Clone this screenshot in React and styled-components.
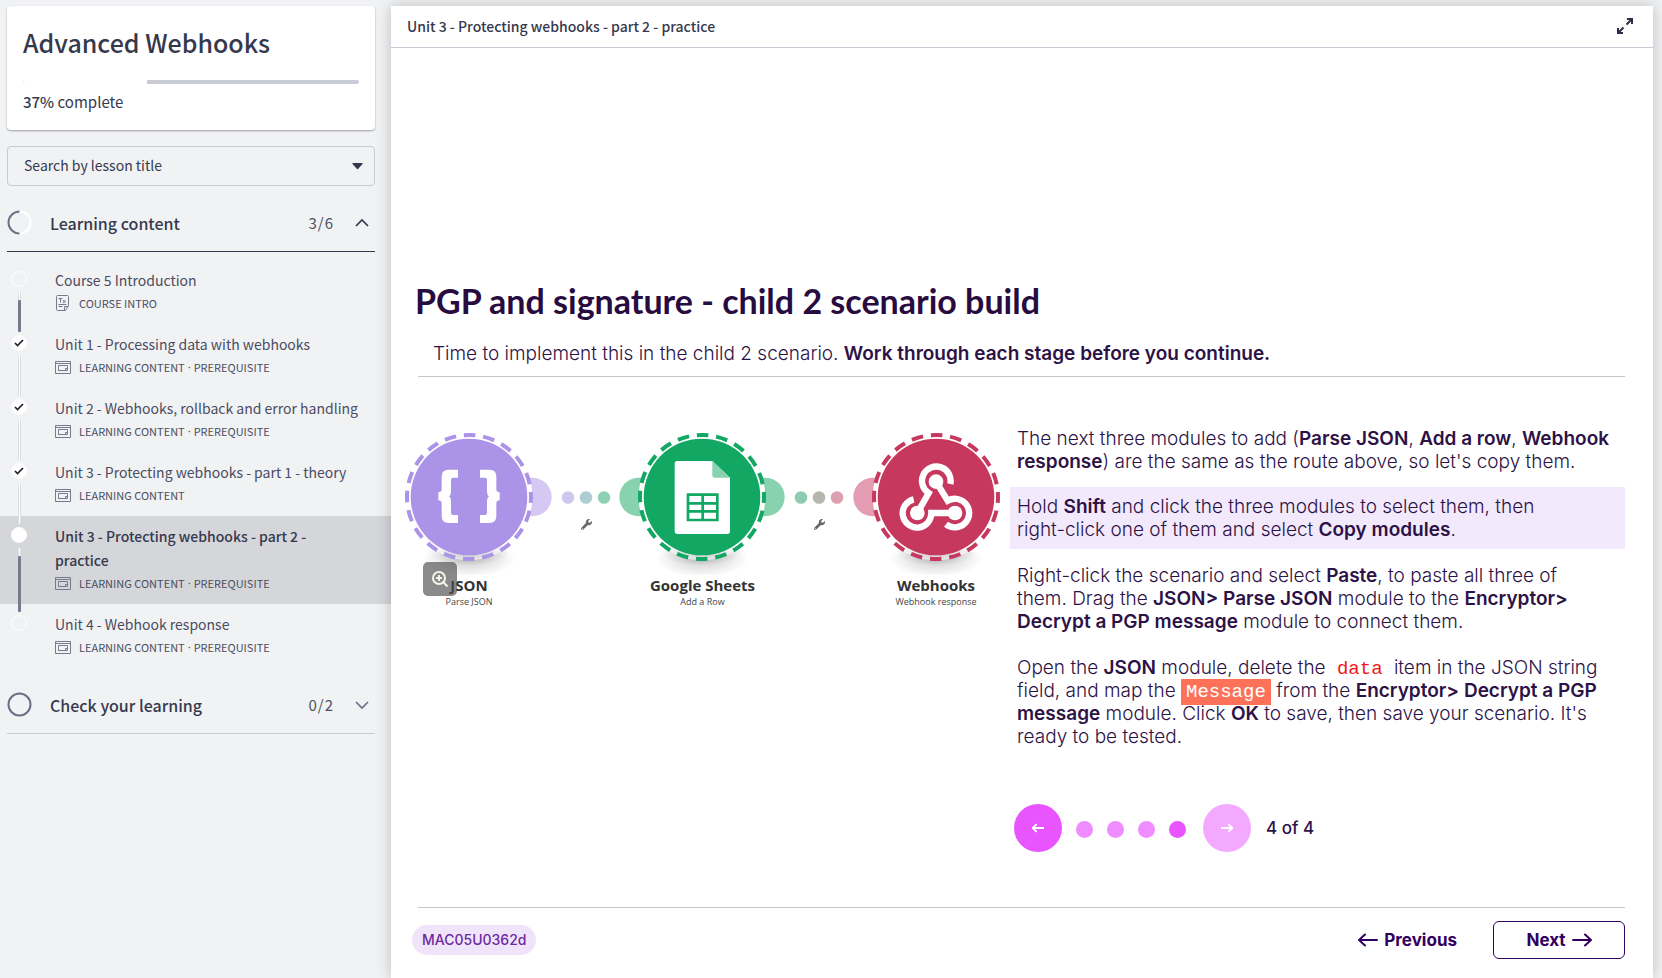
import React from 'react';
import styled, { createGlobalStyle, css } from 'styled-components';
import { FaWrench } from 'react-icons/fa';

const ui = '"Noto Sans CJK SC", "Noto Sans", sans-serif';
const body = 'Inter, "Liberation Sans", sans-serif';
const mono = '"Liberation Mono", monospace';
const ink = '#36394d';
const plum = '#2d1246';

const GlobalStyle = createGlobalStyle`
  * { box-sizing: border-box; }
  body { margin: 0; background: #f1f2f4; color: ${ink}; font-family: ${ui}; }
  h1, h2, p, ol { margin: 0; padding: 0; }
  button { font: inherit; color: inherit; padding: 0; border: 0; background: none; cursor: pointer; }
  a { color: inherit; text-decoration: none; }
`;

const Page = styled.div`
  display: grid;
  grid-template-columns: 391px minmax(0, 1fr);
  min-height: 100vh;
  padding: 6px 9px 0 0;
`;

/* Sidebar */

const Sidebar = styled.aside`
  display: flex;
  flex-direction: column;
`;

const CourseCard = styled.section`
  height: 124px;
  margin: 0 16px 16px 7px;
  padding: 16px 16px 0;
  background: #fff;
  border-radius: 4px;
  box-shadow: 0 1px 2px rgba(30, 32, 50, 0.4);
`;

const CourseTitle = styled.h1`
  font-size: 25px;
  line-height: 40px;
  font-weight: 500;
`;

const Progress = styled.div`
  height: 4px;
  margin-top: 18px;
  overflow: hidden;
  border-radius: 2px;
  background: #c9cbd5;
`;

const ProgressFill = styled.div`
  height: 100%;
  background: #fff;
`;

const ProgressText = styled.p`
  margin-top: 6px;
  font-size: 15px;
  line-height: 24px;
  b { font-weight: 500; }
`;

const SearchBox = styled.label`
  position: relative;
  display: block;
  margin: 0 16px 9px 7px;
  svg { position: absolute; right: 12px; top: 17px; pointer-events: none; }
`;

const SearchSelect = styled.select`
  appearance: none;
  display: block;
  width: 100%;
  height: 40px;
  padding: 0 16px 2px;
  border: 1px solid #c7c9d3;
  border-radius: 4px;
  background: transparent;
  color: ${ink};
  font: 14px/24px ${ui};
`;

const SectionHeader = styled.button`
  display: flex;
  align-items: center;
  height: 57px;
  margin: 0 16px 0 7px;
  padding-bottom: 1px;
  border-bottom: 1px solid ${(p) => (p.$open ? ink : '#c7c9d3')};
  text-align: left;
`;

const SectionName = styled.span`
  flex: 1;
  margin-left: 18px;
  font-size: 16px;
  line-height: 24px;
  font-weight: 500;
`;

const SectionCount = styled.span`
  margin-right: 15px;
  font-size: 15px;
  line-height: 24px;
  letter-spacing: 1px;
  color: #4d5064;
`;

const LessonList = styled.ol`
  list-style: none;
  padding: 8px 0 9px;
`;

const Lesson = styled.a`
  display: grid;
  grid-template-columns: 16px minmax(0, 1fr);
  column-gap: 28px;
  padding: 0 16px 0 11px;
  ${(p) => p.$current && css`background: #d5d6da;`}
`;

const Rail = styled.span`
  display: flex;
  flex-direction: column;
  align-items: center;
  padding-top: 11px;
`;

const Dot = styled.span`
  display: grid;
  place-items: center;
  flex: none;
  width: 16px;
  height: 16px;
  border: 1px solid #fff;
  border-radius: 50%;
  background: ${(p) => (p.$filled ? '#fff' : 'transparent')};
`;

const Track = styled.span`
  position: relative;
  flex: 1;
  width: 3px;
  margin: 5px 0 -8px;
  padding-top: 8px;
  border: solid #dcdde1;
  border-width: 0 1px;
  background: #fff;
`;

const TrackFill = styled.span`
  display: block;
  height: 100%;
  margin: 0 -1px;
  border-radius: 1px;
  background: #777a8d;
`;

const LessonText = styled.span`
  display: block;
  padding: 8px 0 10px;
`;

const LessonName = styled.span`
  display: block;
  white-space: pre-line;
  font-size: 14px;
  line-height: 24px;
  font-weight: ${(p) => (p.$current ? 500 : 400)};
  color: ${(p) => (p.$current ? ink : '#4a4d61')};
`;

const LessonMeta = styled.span`
  display: flex;
  align-items: center;
  font-size: 11px;
  line-height: 22px;
  color: #4a4d61;
  svg { margin-right: 8px; }
`;

const Separator = styled.span`
  margin: 0 3px;
  font-family: "Noto Sans", sans-serif;
`;

/* Lesson panel */

const Panel = styled.main`
  display: flex;
  flex-direction: column;
  background: #fff;
  box-shadow: 0 0 14px rgba(0, 0, 0, 0.22);
`;

const PanelHeader = styled.header`
  display: flex;
  align-items: center;
  justify-content: space-between;
  height: 42px;
  padding: 0 20px 2px 16px;
  border-bottom: 1px solid #c9c9d6;
`;

const PanelTitle = styled.h2`
  font-size: 14px;
  line-height: 20px;
  font-weight: 500;
`;

const IconButton = styled.button`
  display: grid;
  place-items: center;
  width: 16px;
  height: 16px;
`;

const Content = styled.article`
  flex: 1;
  display: flex;
  flex-direction: column;
  padding: 233px 28px 0 14px;
  font-family: ${body};
  color: ${plum};
  b { font-weight: 600; }
`;

const Heading = styled.h2`
  margin-left: 10px;
  font: 700 34px/40px Lato, ${body};
  color: #280b3f;
`;

const Intro = styled.p`
  margin: 21px 0 11px 28px;
  font-size: 19px;
  line-height: 23px;
  font-weight: 300;
`;

const Rule = styled.hr`
  width: calc(100% - 13px);
  height: 1px;
  margin: ${(p) => (p.$lower ? 55 : 0)}px 0 0 13px;
  border: 0;
  background: #cdc4ca;
`;

const Columns = styled.div`
  display: grid;
  grid-template-columns: 595px minmax(0, 1fr);
  column-gap: 10px;
  margin-top: 50px;
`;

const Diagram = styled.figure`
  position: relative;
  margin: 6px 0 0;
  > svg { display: block; width: 100%; }
`;

const Labels = styled.figcaption`
  display: flex;
  justify-content: space-between;
`;

const ModuleLabel = styled.span`
  width: 128px;
  text-align: center;
  font: 700 15px/20px "Open Sans", sans-serif;
  color: #333;
  small {
    display: block;
    font-size: 9px;
    line-height: 14px;
    font-weight: 400;
    color: #444;
  }
`;

const ZoomButton = styled.button`
  position: absolute;
  left: 18px;
  top: 129px;
  display: grid;
  place-items: center;
  width: 34px;
  height: 34px;
  border-radius: 5px;
  background: rgba(78, 78, 78, 0.66);
`;

const Steps = styled.div`
  display: flex;
  flex-direction: column;
  font-size: 19px;
  line-height: 23px;
  font-weight: 300;
`;

const Step = styled.p`
  padding: 0 7px;
  margin-bottom: ${(p) => p.$gap}px;
  ${(p) => p.$active && css`
    padding-top: 8px;
    padding-bottom: 8px;
    background: #f2e9fc;
  `}
`;

const Code = styled.code`
  padding: 0 6px;
  font: 400 19px/20px ${mono};
  color: #f01818;
`;

const Token = styled.code`
  padding: 2px 5px;
  background: #fc7158;
  color: #fff;
  font: 400 19px/20px ${mono};
`;

const Pager = styled.nav`
  display: flex;
  align-items: center;
  margin-top: 56px;
  padding-left: 4px;
  font-size: 17px;
  line-height: 24px;
  font-weight: 500;
`;

const RoundButton = styled.button`
  display: grid;
  place-items: center;
  width: 48px;
  height: 48px;
  border-radius: 50%;
  background: ${(p) => (p.$muted ? '#f3a9ff' : '#e855ff')};
`;

const PageDots = styled.span`
  display: flex;
  gap: 14px;
  margin: 3px 17px 0 14px;
`;

const PageDot = styled.button`
  width: 17px;
  height: 17px;
  border-radius: 50%;
  background: ${(p) => (p.$active ? '#e855ff' : '#ef8cff')};
`;

const PageCount = styled.span`
  margin-left: 15px;
`;

const Footer = styled.footer`
  display: flex;
  align-items: center;
  margin-top: 13px;
  padding: 0 0 18px 7px;
  font-size: 17px;
  line-height: 24px;
  font-weight: 700;
  color: #32005e;
`;

const Chip = styled.span`
  margin-right: auto;
  padding: 0 10px;
  border-radius: 15px;
  background: #f0e4fb;
  color: #6b2a9e;
  font-size: 14px;
  line-height: 30px;
  font-weight: 500;
`;

const NavButton = styled.button`
  display: flex;
  align-items: center;
  justify-content: center;
  gap: 6px;
  height: 38px;
  ${(p) => p.$outlined && css`
    width: 132px;
    margin-left: 36px;
    border: 1px solid #32005e;
    border-radius: 6px;
  `}
`;

const LessonIcon = () => (
  <svg width="16" height="13" viewBox="0 0 16 13" fill="none" stroke="#777a8d">
    <path d="M.5.5h15v12H.5zM.5 2.5h15M3.5 4.5h9v5h-9zM12 7.500h-1.500V9" />
  </svg>
);

const DocIcon = () => (
  <svg width="16" height="16" viewBox="0 0 16 16" fill="none" stroke="#777a8d">
    <path d="M2.500.5h10q1 0 1 1v9l-3 5h-8q-1 0-1-1v-13q0-1 1-1zM9.500 15.500v-4h4M3.500 9.500h8M3.500 11.500h4M3.500 3.500h4M5.500 3.500v4M8 5l2.500 3M10.500 5 8 8" />
  </svg>
);

const CheckIcon = () => (
  <svg width="10" height="8" viewBox="0 0 10 8" fill="none" stroke="#1d1f2b" strokeWidth="1.7">
    <path d="m1 4 2.500 2.500L9 1" />
  </svg>
);

const SectionRing = ({ half }) => (
  <svg width="25" height="25" viewBox="0 0 25 25" fill="none" strokeWidth="2">
    <circle cx="12.5" cy="12.5" r="11" stroke={half ? '#fff' : '#6d7085'} />
    {half && <path d="M12.500 23.500a11 11 0 0 1 0-22" stroke="#6d7085" />}
  </svg>
);

const Chevron = ({ up }) => (
  <svg width="26" height="16" viewBox="0 0 26 16" fill="none" stroke={up ? ink : '#6d7085'} strokeWidth="1.7">
    <path d={up ? 'M7 11l6-6 6 6' : 'M7 5l6 6 6-6'} />
  </svg>
);

const Arrow = ({ right, size = 20, color = '#32005e', weight = 2 }) => (
  <svg width={size} height={size} viewBox="0 0 20 20" fill="none" stroke={color} strokeWidth={weight} strokeLinecap="round" strokeLinejoin="round">
    <path d={right ? 'M1 10h18M13 4.500l6 5.500-6 5.500' : 'M19 10H1M7 4.500 1 10l6 5.500'} />
  </svg>
);

const Module = ({ x, color, tint, left, right, children }) => (
  <g transform={`translate(${x} 64) scale(.3333)`}>
    <ellipse cx="0" cy="185" rx="140" ry="56" fill="url(#shade)" />
    {left && <circle cx="-190" cy="0" r="58" fill={tint} />}
    {right && <circle cx="190" cy="0" r="58" fill={tint} />}
    <circle r="190" fill="#fff" />
    <ellipse cx="0" cy="170" rx="120" ry="36" fill="url(#shade)" />
    <circle r="186" fill="none" stroke={color} strokeWidth="12" strokeDasharray="35 23.430" strokeDashoffset="17" />
    <circle r="175" fill={color} />
    {children}
  </g>
);

const Link = ({ x, colors }) => (
  <g>
    {colors.map((c, i) => (
      <circle key={c} cx={x + (i - 1) * 18} cy="64.5" r="6.3" fill={c} />
    ))}
    <FaWrench x={x - 5} y="86" size={11} color="#666" />
  </g>
);

const brace = 'M-33-82h-29q-20 0-20 20v38q0 10-10 10v24q10 0 10 10v38q0 20 20 20h29v-24h-15q-6 0-6-6v-36q0-10-6-14 6-4 6-14v-36q0-6 6-6h15z';

const Flow = () => (
  <svg viewBox="0 0 595 142" role="img" aria-label="JSON, Google Sheets and Webhooks modules">
    <defs>
      <radialGradient id="shade">
        <stop offset="0" stopColor="#000" stopOpacity=".2" />
        <stop offset="1" stopColor="#000" stopOpacity="0" />
      </radialGradient>
    </defs>
    <Module x={64} color="#ab93e8" tint="#d5c8f2" right>
      <path d={brace} fill="#fff" />
      <path d={brace} fill="#fff" transform="scale(-1 1)" />
    </Module>
    <Link x={181} colors={['#cfc8ec', '#adcdd2', '#8dd1b4']} />
    <Module x={297} color="#12a762" tint="#88d2b0" left right>
      <path d="M-74-108H31l53 50v161q0 8-8 8H-74q-8 0-8-8v-203q0-8 8-8z" fill="#fff" />
      <path d="M31-108l53 50H39q-8 0-8-8z" fill="#88d2b0" />
      <path d="M-42-7h88v76h-88zM2-7v76M-42 19h88M-42 43h88" fill="none" stroke="#12a762" strokeWidth="8" />
    </Module>
    <Link x={414} colors={['#8dccb0', '#b6b6ae', '#dba0b0']} />
    <Module x={531} color="#c7385f" tint="#e39cb2" left>
      <g fill="none" stroke="#fff" strokeWidth="19">
        <path d="M43-39A43 43 0 1 0-22-12L-56 48" />
        <path d="M-67 7A43 43 0 1 0-14 48H57" />
        <path d="M30 82A43 43 0 1 0 35 11L0-46" />
      </g>
      <g fill="#fff">
        <circle cx="0" cy="-46" r="22" />
        <circle cx="-56" cy="48" r="22" />
        <circle cx="57" cy="48" r="22" />
      </g>
    </Module>
  </svg>
);

const lessons = [
  { name: 'Course 5 Introduction', kind: 'COURSE INTRO', doc: true, fill: true },
  { name: 'Unit 1 - Processing data with webhooks', kind: 'LEARNING CONTENT', required: true, done: true },
  { name: 'Unit 2 - Webhooks, rollback and error handling', kind: 'LEARNING CONTENT', required: true, done: true },
  { name: 'Unit 3 - Protecting webhooks - part 1 - theory', kind: 'LEARNING CONTENT', done: true },
  { name: 'Unit 3 - Protecting webhooks - part 2 -\npractice', kind: 'LEARNING CONTENT', required: true, current: true, fill: true },
  { name: 'Unit 4 - Webhook response', kind: 'LEARNING CONTENT', required: true, last: true },
];

const modules = [
  ['JSON', 'Parse JSON'],
  ['Google Sheets', 'Add a Row'],
  ['Webhooks', 'Webhook response'],
];

const progress = 37;

export default function App() {
  return (
    <>
      <GlobalStyle />
      <Page>
        <Sidebar>
          <CourseCard>
            <CourseTitle>Advanced Webhooks</CourseTitle>
            <Progress role="progressbar" aria-valuenow={progress} aria-label="Course progress">
              <ProgressFill style={{ width: `${progress}%` }} />
            </Progress>
            <ProgressText><b>{progress}%</b> complete</ProgressText>
          </CourseCard>
          <SearchBox>
            <SearchSelect aria-label="Search by lesson title" defaultValue="">
              <option value="">Search by lesson title</option>
            </SearchSelect>
            <svg width="11" height="7" viewBox="0 0 11 7" fill={ink}><path d="M1 0h9q1 0 .5 1L6 6q-.5.5-1 0L.500 1Q0 0 1 0z" /></svg>
          </SearchBox>
          <SectionHeader $open aria-expanded="true">
            <SectionRing half />
            <SectionName>Learning content</SectionName>
            <SectionCount>3/6</SectionCount>
            <Chevron up />
          </SectionHeader>
          <LessonList>
            {lessons.map((l) => (
              <li key={l.name}>
                <Lesson href="#" $current={l.current}>
                  <Rail>
                    <Dot $filled={l.done || l.current}>{l.done && <CheckIcon />}</Dot>
                    {!l.last && <Track>{l.fill && <TrackFill />}</Track>}
                  </Rail>
                  <LessonText>
                    <LessonName $current={l.current}>{l.name}</LessonName>
                    <LessonMeta>
                      {l.doc ? <DocIcon /> : <LessonIcon />}
                      {l.kind}
                      {l.required && <><Separator>·</Separator>PREREQUISITE</>}
                    </LessonMeta>
                  </LessonText>
                </Lesson>
              </li>
            ))}
          </LessonList>
          <SectionHeader aria-expanded="false">
            <SectionRing />
            <SectionName>Check your learning</SectionName>
            <SectionCount>0/2</SectionCount>
            <Chevron />
          </SectionHeader>
        </Sidebar>

        <Panel>
          <PanelHeader>
            <PanelTitle>Unit 3 - Protecting webhooks - part 2 - practice</PanelTitle>
            <IconButton aria-label="Full screen">
              <svg width="16" height="16" viewBox="0 0 16 16" fill="none" stroke="#2b2e48" strokeWidth="2">
                <path d="M10 1h5v5M15 1 9.500 6.500M6 15H1v-5M1 15l5.500-5.500" />
              </svg>
            </IconButton>
          </PanelHeader>
          <Content>
            <Heading>PGP and signature - child 2 scenario build</Heading>
            <Intro>Time to implement this in the child 2 scenario. <b>Work through each stage before you continue.</b></Intro>
            <Rule />
            <Columns>
              <Diagram>
                <Flow />
                <Labels>
                  {modules.map(([name, action]) => (
                    <ModuleLabel key={name}>{name}<small>{action}</small></ModuleLabel>
                  ))}
                </Labels>
                <ZoomButton aria-label="Zoom in">
                  <svg width="18" height="18" viewBox="0 0 18 18" fill="none" stroke="#f4f6e6" strokeWidth="2">
                    <circle cx="8" cy="8" r="6" />
                    <path d="M12.500 12.500 16.500 16.500M8 5v6M5 8h6" />
                  </svg>
                </ZoomButton>
              </Diagram>
              <Steps>
                <Step $gap={14}>
                  The next three modules to add (<b>Parse JSON</b>, <b>Add a row</b>, <b>Webhook<br />response</b>) are the same as the route above, so let's copy them.
                </Step>
                <Step $active $gap={15}>
                  Hold <b>Shift</b> and click the three modules to select them, then<br />right-click one of them and select <b>Copy modules</b>.
                </Step>
                <Step $gap={23}>
                  Right-click the scenario and select <b>Paste</b>, to paste all three of<br />them. Drag the <b>JSON&gt; Parse JSON</b> module to the <b>Encryptor&gt;<br />Decrypt a PGP message</b> module to connect them.
                </Step>
                <Step $gap={0}>
                  Open the <b>JSON</b> module, delete the <Code>data</Code> item in the JSON string<br />field, and map the <Token>Message</Token> from the <b>Encryptor&gt; Decrypt a PGP<br />message</b> module. Click <b>OK</b> to save, then save your scenario. It's<br />ready to be tested.
                </Step>
                <Pager aria-label="Steps">
                  <RoundButton aria-label="Previous step"><Arrow size={12} color="#fff" weight={3} /></RoundButton>
                  <PageDots>
                    {[1, 2, 3, 4].map((n) => <PageDot key={n} $active={n === 4} aria-label={`Step ${n}`} />)}
                  </PageDots>
                  <RoundButton $muted aria-label="Next step"><Arrow right size={12} color="#fff" weight={3} /></RoundButton>
                  <PageCount>4 of 4</PageCount>
                </Pager>
              </Steps>
            </Columns>
            <Rule $lower />
            <Footer>
              <Chip>MAC05U0362d</Chip>
              <NavButton><Arrow />Previous</NavButton>
              <NavButton $outlined>Next<Arrow right /></NavButton>
            </Footer>
          </Content>
        </Panel>
      </Page>
    </>
  );
}
